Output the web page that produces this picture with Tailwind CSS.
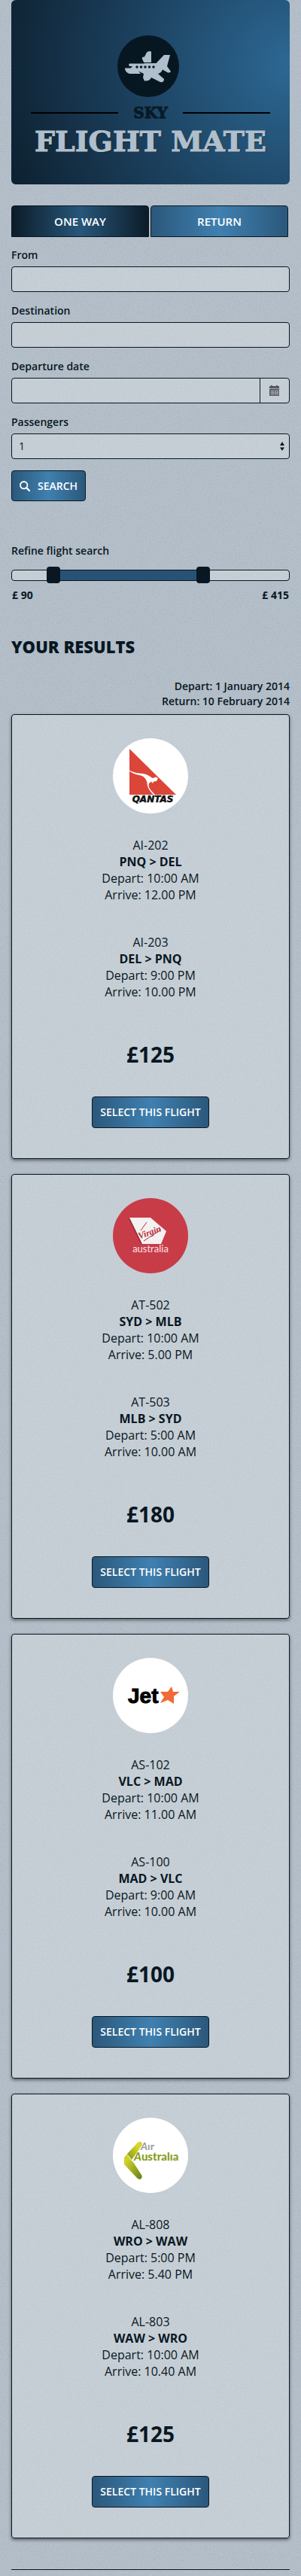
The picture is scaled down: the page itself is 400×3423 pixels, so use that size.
<!DOCTYPE html>
<html lang="en">
<head>
<meta charset="utf-8">
<meta name="viewport" content="width=device-width, initial-scale=1">
<title>Sky Flight Mate</title>
<script src="https://cdn.jsdelivr.net/npm/@tailwindcss/browser@4"></script>
</head>
<body class="relative isolate bg-[#b5c0ca] font-['Open_Sans',sans-serif] text-[#081722]">
<!-- paper grain -->
<svg class="pointer-events-none absolute inset-0 -z-10 size-full" aria-hidden="true">
  <filter id="grain" x="0" y="0" width="100%" height="100%">
    <feTurbulence type="fractalNoise" baseFrequency="0.7" numOctaves="2" seed="4"/>
    <feColorMatrix values="0 0 0 0 0.2  0 0 0 0 0.25  0 0 0 0 0.3  0.6 0 0 0 -0.26"/>
  </filter>
  <rect width="100%" height="100%" filter="url(#grain)"/>
</svg>

<div class="px-[15px] pb-2">
  <header class="flex flex-col items-center rounded-md bg-[radial-gradient(ellipse_110%_170%_at_100%_35%,#2c6894_0%,#25557a_25%,#1c4260_50%,#153047_75%,#0c202e_100%)] px-[26px] pt-[47px] pb-[37px]">
    <svg class="mr-1.5 size-[82px]" viewBox="0 0 82 82" aria-hidden="true">
      <circle cx="41" cy="41" r="41" fill="#071722"/>
      <path fill="#b0bfcc" d="M16 37.500H36L33 31.500L33 29L36 28.500L39 22.500Q42 20 45 21.500V36.500H52L62 26H70L66 41L71 48Q70 50 67 49.500L60 45.500Q58 50 54 51L62 58Q62 63 57 62L45 56Q43 61 36 60.500L34 56L35 51L28 47.500L31 51H16Q10 49 10 43.500H18L20 41H16L15 39Z"/>
      <path d="M32 36.500H52" stroke="#071722" stroke-width="1"/>
      <g fill="#071722"><circle cx="26" cy="42" r="1.700"/><circle cx="31.500" cy="42" r="1.700"/><circle cx="37" cy="42" r="1.700"/><circle cx="42.500" cy="42" r="1.700"/><circle cx="48" cy="42" r="1.700"/></g>
    </svg>
    <h1 class="flex w-full flex-col items-center font-['DejaVu_Serif',serif] font-bold">
      <span class="flex w-full items-center gap-5 pt-[7px] text-xl leading-7 text-[#081a27] [-webkit-text-stroke:1px_#081a27]">
        <span class="h-0.5 flex-1 bg-black"></span>SKY<span class="h-0.5 flex-1 bg-black"></span>
      </span>
      <span class="pt-1 text-[38px] leading-10 whitespace-nowrap text-[#b0bfcc] [-webkit-text-stroke:1px_#b0bfcc] [text-shadow:1px_1px_1px_#0a1a26]">FLIGHT MATE</span>
    </h1>
  </header>

  <main>
    <div class="mt-7 mr-0.5 grid grid-cols-2 gap-0.5 text-[15px] font-semibold text-white">
      <button type="button" class="h-[42px] rounded-t border border-[#081722] bg-[linear-gradient(90deg,#0c1c28,#27567a_50%,#0c1c28)]">ONE WAY</button>
      <button type="button" class="h-[42px] rounded-t border border-[#081722] bg-[linear-gradient(90deg,#2b587b,#3f80b0_50%,#2b587b)]">RETURN</button>
    </div>

    <form class="mt-3.5 flex flex-col gap-[15px] text-sm leading-5">
      <div class="flex flex-col gap-[5px]">
        <label for="from" class="font-semibold">From</label>
        <input id="from" type="text" class="h-[34px] w-full rounded border border-[#081722] bg-white/25 px-2">
      </div>
      <div class="flex flex-col gap-[5px]">
        <label for="dest" class="font-semibold">Destination</label>
        <input id="dest" type="text" class="h-[34px] w-full rounded border border-[#081722] bg-white/25 px-2">
      </div>
      <div class="flex flex-col gap-[5px]">
        <label for="date" class="font-semibold">Departure date</label>
        <div class="flex h-[34px] rounded border border-[#081722] bg-white/25">
          <input id="date" type="text" class="min-w-0 flex-1 bg-transparent px-2">
          <button type="button" aria-label="Choose date" class="flex w-[39px] items-center justify-center border-l border-[#081722]">
            <svg class="size-3.5" viewBox="0 0 14 14" aria-hidden="true">
              <path fill="#555a5e" d="M2 0h2v1h5V0h2v1h2v13H0V1h2z"/>
              <path stroke="#a6acb1" fill="none" d="M0 4.500H14"/>
              <path stroke="#b9bfc4" fill="none" stroke-width="0.600" d="M1 7.500H13M1 9.500H13M1 11.500H13M3.500 6.500V13M5.500 6.500V13M8.500 6.500V13M10.500 6.500V13"/>
            </svg>
          </button>
        </div>
      </div>
      <div class="flex flex-col gap-[5px]">
        <label for="pax" class="font-semibold">Passengers</label>
        <div class="relative">
          <select id="pax" class="block h-[34px] w-full appearance-none rounded border border-[#081722] bg-white/25 px-[9px] text-sm">
            <option>1</option><option>2</option><option>3</option><option>4</option>
          </select>
          <svg class="pointer-events-none absolute top-[11px] right-[7px] h-3 w-1.5" viewBox="0 0 6 12" fill="#081722" aria-hidden="true"><path d="M3 0L6 5H0zM3 12L0 7.500H6z"/></svg>
        </div>
      </div>
      <button type="submit" class="flex h-[41px] items-center gap-2.5 self-start rounded border border-[#081722] bg-[linear-gradient(90deg,#2b587b,#3f80b0_50%,#2b587b)] px-2.5 text-sm font-semibold text-white">
        <svg class="size-3.5" viewBox="0 0 14 14" fill="none" stroke="#fff" aria-hidden="true"><circle cx="5.700" cy="5.700" r="4.700" stroke-width="1.800"/><path d="M9 9L13 13" stroke-width="2.400" stroke-linecap="round"/></svg>
        SEARCH
      </button>
    </form>

    <section class="mt-14 text-sm leading-5">
      <h2 class="font-semibold">Refine flight search</h2>
      <div class="relative mt-[15px] h-[15px] rounded border border-[#081722] bg-white/25">
        <div class="absolute inset-y-0 bg-[#285273]" style="left:15%;width:55%"></div>
        <input type="range" min="13" max="588" value="90" aria-label="Minimum price" class="pointer-events-none absolute -inset-x-px -top-[5px] h-[22px] w-[calc(100%+2px)] appearance-none bg-transparent [&::-webkit-slider-thumb]:pointer-events-auto [&::-webkit-slider-thumb]:h-[22px] [&::-webkit-slider-thumb]:w-[18px] [&::-webkit-slider-thumb]:appearance-none [&::-webkit-slider-thumb]:rounded [&::-webkit-slider-thumb]:bg-[#081722]">
        <input type="range" min="13" max="588" value="415" aria-label="Maximum price" class="pointer-events-none absolute -inset-x-px -top-[5px] h-[22px] w-[calc(100%+2px)] appearance-none bg-transparent [&::-webkit-slider-thumb]:pointer-events-auto [&::-webkit-slider-thumb]:h-[22px] [&::-webkit-slider-thumb]:w-[18px] [&::-webkit-slider-thumb]:appearance-none [&::-webkit-slider-thumb]:rounded [&::-webkit-slider-thumb]:bg-[#081722]">
      </div>
      <div class="mt-[9px] flex justify-between px-px font-bold"><span>£ 90</span><span>£ 415</span></div>
    </section>

    <section class="mt-11">
      <h2 class="text-[22px] leading-7 font-extrabold">YOUR RESULTS</h2>
      <p class="mt-[29px] mb-[7px] text-right text-sm leading-5 font-semibold">Depart: 1 January 2014<br>Return: 10 February 2014</p>

      <div class="flex flex-col gap-5 text-center leading-[22px]">
        <article class="flex flex-col items-center rounded border border-[#081722] bg-white/25 pt-[31px] pb-10 shadow-[0_2px_4px_rgba(0,0,0,0.5)]">
          <svg class="size-[100px]" viewBox="0 0 100 100" role="img" aria-label="Qantas">
            <circle cx="50" cy="50" r="50" fill="#fff"/>
            <path fill="#db4638" d="M22 14L84 75H22z"/>
            <path fill="#fff" d="M22 42.500C30 47 36 46 42 47.500C48 48.500 50 52 53 53L57 51.500L60 53L58 57L54 57.500L53 60L51 57.500L48 60C46 66 52 70 56 75H54C49 70 46 66 45.500 60C45 54 41 50 35 49C29 48 25 46 22 43.500Z"/>
            <text x="53" y="85" text-anchor="middle" font-family="DejaVu Sans" font-size="12" font-weight="bold" font-style="italic" fill="#111" stroke="#111" stroke-width="0.500">QANTAS</text>
          </svg>
          <div class="mt-[31px]"><p>AI-202</p><p class="font-bold">PNQ &gt; DEL</p><p>Depart: 10:00 AM</p><p>Arrive: 12.00 PM</p></div>
          <div class="mt-[41px]"><p>AI-203</p><p class="font-bold">DEL &gt; PNQ</p><p>Depart: 9:00 PM</p><p>Arrive: 10.00 PM</p></div>
          <p class="mt-14 text-[28px] leading-8 font-bold">£125</p>
          <button type="button" class="mt-10 h-[42px] rounded border border-[#081722] bg-[linear-gradient(90deg,#2b587b,#3f80b0_50%,#2b587b)] px-2.5 text-sm font-semibold text-white">SELECT THIS FLIGHT</button>
        </article>

        <article class="flex flex-col items-center rounded border border-[#081722] bg-white/25 pt-[31px] pb-10 shadow-[0_2px_4px_rgba(0,0,0,0.5)]">
          <svg class="size-[100px]" viewBox="0 0 100 100" role="img" aria-label="Virgin Australia">
            <circle cx="50" cy="50" r="50" fill="#c83c48"/>
            <path fill="#8f2530" d="M21 27L37 60L40 61L24 27z"/>
            <path fill="#f4f1f0" d="M22 26H50L71 44L64 61H39z"/>
            <text transform="rotate(-20 50 46)" x="49" y="49" text-anchor="middle" font-family="Liberation Serif" font-size="12" font-style="italic" font-weight="bold" fill="#b92c38">Virgin</text>
            <path d="M41 57L64 42M37 43L45 32" stroke="#b92c38" stroke-width="1" fill="none"/>
            <text x="50" y="72" text-anchor="middle" font-family="Lato" font-size="13" fill="#fbe3e4">australia</text>
          </svg>
          <div class="mt-[31px]"><p>AT-502</p><p class="font-bold">SYD &gt; MLB</p><p>Depart: 10:00 AM</p><p>Arrive: 5.00 PM</p></div>
          <div class="mt-[41px]"><p>AT-503</p><p class="font-bold">MLB &gt; SYD</p><p>Depart: 5:00 AM</p><p>Arrive: 10.00 AM</p></div>
          <p class="mt-14 text-[28px] leading-8 font-bold">£180</p>
          <button type="button" class="mt-10 h-[42px] rounded border border-[#081722] bg-[linear-gradient(90deg,#2b587b,#3f80b0_50%,#2b587b)] px-2.5 text-sm font-semibold text-white">SELECT THIS FLIGHT</button>
        </article>

        <article class="flex flex-col items-center rounded border border-[#081722] bg-white/25 pt-[31px] pb-10 shadow-[0_2px_4px_rgba(0,0,0,0.5)]">
          <svg class="size-[100px]" viewBox="0 0 100 100" role="img" aria-label="Jetstar">
            <circle cx="50" cy="50" r="50" fill="#fff"/>
            <text x="20" y="60" font-family="Liberation Sans" font-size="28" font-weight="bold" fill="#000" stroke="#000" stroke-width="1">Jet</text>
            <path fill="#f26a36" d="M78 38L80 45L89 45L81 51L81 61L73 56L63 60L68 52L63 45L73 45z"/>
          </svg>
          <div class="mt-[31px]"><p>AS-102</p><p class="font-bold">VLC &gt; MAD</p><p>Depart: 10:00 AM</p><p>Arrive: 11.00 AM</p></div>
          <div class="mt-[41px]"><p>AS-100</p><p class="font-bold">MAD &gt; VLC</p><p>Depart: 9:00 AM</p><p>Arrive: 10.00 AM</p></div>
          <p class="mt-14 text-[28px] leading-8 font-bold">£100</p>
          <button type="button" class="mt-10 h-[42px] rounded border border-[#081722] bg-[linear-gradient(90deg,#2b587b,#3f80b0_50%,#2b587b)] px-2.5 text-sm font-semibold text-white">SELECT THIS FLIGHT</button>
        </article>

        <article class="flex flex-col items-center rounded border border-[#081722] bg-white/25 pt-[31px] pb-10 shadow-[0_2px_4px_rgba(0,0,0,0.5)]">
          <svg class="size-[100px]" viewBox="0 0 100 100" role="img" aria-label="Air Australia">
            <defs>
              <linearGradient id="wingTop" x1="1" y1="0" x2="0" y2="1"><stop offset="0.300" stop-color="#d8d42a"/><stop offset="1" stop-color="#7d9417"/></linearGradient>
              <linearGradient id="wingLow" x1="0" y1="0" x2="1" y2="1"><stop offset="0.200" stop-color="#d2d02a"/><stop offset="1" stop-color="#5f8016"/></linearGradient>
            </defs>
            <circle cx="50" cy="50" r="50" fill="#fff"/>
            <path fill="url(#wingTop)" d="M19 48L33 33Q37 30.500 39 34Q39 37 37 39L25 56Q22 52 19 48z"/>
            <path fill="url(#wingLow)" d="M19 48Q22 55 27 59L38 76Q40 80 36 82Q33 82 31 79L15 62V53z"/>
            <text x="37" y="43" font-family="Lato" font-size="14" font-weight="bold" fill="#9a9a9e"><tspan font-style="italic">A</tspan>ır</text>
            <text x="28" y="57" font-family="Lato" font-size="15" font-weight="900" fill="#86a01e"><tspan font-style="italic">A</tspan>ustralıa</text>
          </svg>
          <div class="mt-[31px]"><p>AL-808</p><p class="font-bold">WRO &gt; WAW</p><p>Depart: 5:00 PM</p><p>Arrive: 5.40 PM</p></div>
          <div class="mt-[41px]"><p>AL-803</p><p class="font-bold">WAW &gt; WRO</p><p>Depart: 10:00 AM</p><p>Arrive: 10.40 AM</p></div>
          <p class="mt-14 text-[28px] leading-8 font-bold">£125</p>
          <button type="button" class="mt-10 h-[42px] rounded border border-[#081722] bg-[linear-gradient(90deg,#2b587b,#3f80b0_50%,#2b587b)] px-2.5 text-sm font-semibold text-white">SELECT THIS FLIGHT</button>
        </article>
      </div>
    </section>
  </main>
  <hr class="mt-[41px] border-[#081722]">
</div>
</body>
</html>
